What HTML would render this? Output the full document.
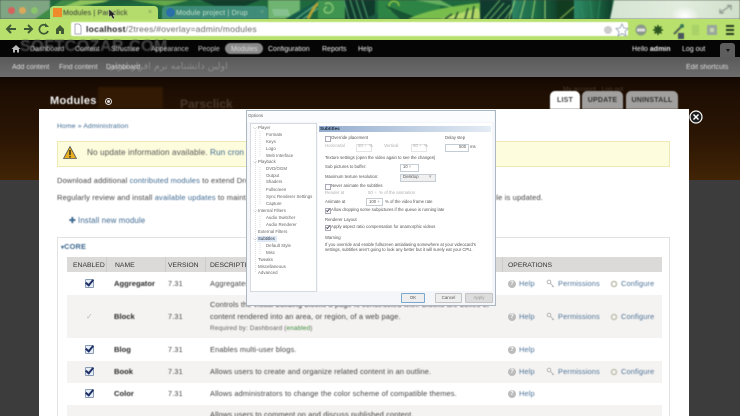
<!DOCTYPE html>
<html><head><meta charset="utf-8"><style>
html,body{margin:0;padding:0;background:#3c3c3c}
#p{position:relative;width:740px;height:416px;overflow:hidden;font-family:"Liberation Sans",sans-serif;background:#3c3c3c}
#p div{position:absolute;white-space:nowrap}
.t{filter:blur(.4px)}
.nav{color:#dcdcdc;font-size:7px;top:45px;line-height:10px;filter:blur(.4px)}
.sub{color:#ddd;font-size:7px;top:63px;line-height:10px;filter:blur(.4px)}
.tab{top:91px;height:18px;border-radius:5px 5px 0 0;background:#a2a09e;color:#333;font-size:7px;font-weight:bold;text-align:center;line-height:19px;letter-spacing:.2px}
.tx{color:#444;font-size:7.6px;line-height:10px;filter:blur(.4px);letter-spacing:.15px}
.l{color:#3f6a92}
.r{left:67px;width:595px}
.nm{left:114px;color:#2a2a2a;font-size:7.6px;font-weight:bold;line-height:10px;filter:blur(.4px)}
.v{left:168px;color:#444;font-size:7.2px;line-height:10px;filter:blur(.4px);letter-spacing:.2px}
.d{left:210px;color:#444;font-size:7.4px;line-height:10px;filter:blur(.4px);letter-spacing:.14px}
.cb{left:85px;width:7px;height:7px;background:#e7edf5;border:1px solid #8a9cb5;border-radius:1px;filter:blur(.3px)}
.cb:after{content:"";position:absolute;left:1px;top:-2px;width:3px;height:6px;border:solid #1d2f66;border-width:0 2px 2px 0;transform:rotate(40deg)}
.op{color:#4d7399;font-size:7.4px;line-height:10px;filter:blur(.4px);letter-spacing:.15px}
.ic{width:8px;height:8px;border-radius:50%;background:#bcbcbc;color:#fff;font-size:6px;line-height:8px;text-align:center;font-weight:bold;filter:blur(.3px)}
.th{top:261px;color:#333;font-size:6.8px;line-height:9px;filter:blur(.3px)}
.o{font-size:4.4px;line-height:6px;color:#666;filter:blur(.25px)}
.ob{font-size:4.25px;line-height:6px;color:#555;filter:blur(.25px)}
.g{color:#b0b0b0}
.box{background:#fff;border:1px solid #aab;width:4px;height:4px}
.ck:after{content:"";position:absolute;left:1px;top:-1px;width:1px;height:3px;border:solid #555;border-width:0 1px 1px 0;transform:rotate(40deg)}
.in{background:#fff;border:1px solid #c4ccd4;height:6px}
.btn{background:#eee;border:1px solid #c4c4c4;height:8px;font-size:4.4px;line-height:8px;text-align:center;color:#555;border-radius:1px;top:293px;filter:blur(.2px)}
</style></head><body><div id="p">

<svg style="position:absolute;left:0;top:0;filter:blur(.7px)" width="740" height="19" viewBox="0 0 740 19">
<defs>
<linearGradient id="g2" x1="0" x2="1"><stop offset="0" stop-color="#d4e4d2"/><stop offset=".55" stop-color="#e2ecde"/><stop offset="1" stop-color="#cfdfca"/></linearGradient>
<linearGradient id="g3" x1="0" x2="1"><stop offset="0" stop-color="#2e8a68"/><stop offset=".5" stop-color="#1f6e48"/><stop offset="1" stop-color="#0f3e2a"/></linearGradient>
<radialGradient id="g4"><stop offset="0" stop-color="#fff"/><stop offset="1" stop-color="#fff" stop-opacity="0"/></radialGradient>
</defs>
<rect width="740" height="19" fill="#1e6a3e"/>
<!-- left -->
<rect width="50" height="19" fill="#7fa582"/>
<path d="M35 19L62 0H78L52 19Z" fill="#3f8c46"/>
<path d="M50 12L80 0H110L70 14Z" fill="#8ec45c"/>
<path d="M78 6L120 0H160L110 6Z" fill="#1b5f38"/>
<path d="M130 0H190L165 6Z" fill="#63a84a"/>
<path d="M190 0H260L235 6Z" fill="#2c8550"/>
<path d="M200 0L215 6H245L260 0Z" fill="#123f2c"/>
<!-- mid -->
<rect x="268" y="0" width="32" height="19" fill="#6fb470"/>
<path d="M285 19L318 0H335L305 19Z" fill="#145a48"/>
<path d="M296 19L322 0M303 19L330 0" stroke="#6fc090" stroke-width="1" fill="none"/>
<path d="M308 19C312 10 316 4 322 0" stroke="#b5a534" stroke-width="3" fill="none"/>
<rect x="318" width="30" height="19" fill="#3f9450"/>
<path d="M325 4a5 5 0 1 1 0 8a3 3 0 0 1 2-5" stroke="#9ed47a" stroke-width="1.200" fill="none"/>
<rect x="345" width="30" height="19" fill="#103a2c"/>
<path d="M350 0L356 19M356 0L362 19M362 0L368 19M344 0L349 19" stroke="#4c9a6c" stroke-width="1.200" fill="none"/>
<path d="M365 19L395 4L385 19Z" fill="#1b5a42"/>
<rect x="378" width="62" height="19" fill="#2e8444"/>
<path d="M395 10a5 5 0 1 1 4 -5" stroke="#9ed243" stroke-width="1.300" fill="none" transform="translate(0 1)"/>
<path d="M385 5L420 19H400Z" fill="#175434"/>
<path d="M415 0L455 8L440 0Z" fill="#65b060"/>
<!-- big leaf -->
<path d="M408 19C430 8 470 4 480 3L482 19Z" fill="#79bd4d"/>
<path d="M440 19L478 8L482 19Z" fill="#b3d868"/>
<path d="M445 19L452 14M455 19L458 12M465 19L468 8M472 19L474 6" stroke="#214a30" stroke-width="1.500" fill="none"/>
<rect x="480" width="50" height="19" fill="#0f3a2e"/>
<path d="M484 19L500 0M490 19L504 3M497 19L510 5M505 19L517 2M512 19L522 0" stroke="#6ab668" stroke-width="1" fill="none"/>
<rect x="512" width="45" height="19" fill="url(#g3)" opacity=".9"/>
<path d="M515 0L509 19M525 0L520 19M535 0L532 19M545 0L545 19" stroke="#a5d676" stroke-width="1" fill="none"/>
<rect x="557" width="18" height="19" fill="#123c20"/>
<path d="M560 19L575 6" stroke="#9ac25a" stroke-width="1" fill="none"/>
<rect x="574" width="38" height="19" fill="url(#g3)"/>
<path d="M580 0L584 19M590 0L592 19M600 0L598 19" stroke="#2c8a5e" stroke-width="1" fill="none"/>
<path d="M614 0L610 19H740V0Z" fill="url(#g2)"/>
<ellipse cx="685" cy="16" rx="14" ry="10" fill="url(#g4)"/>
<path d="M721 12L730 6M727 5.500H731V10M720 9V13H724" stroke="#8a948a" stroke-width="1.300" fill="none"/>
</svg>
<!-- traffic lights -->
<div style="left:8px;top:7px;width:7px;height:7px;border-radius:50%;background:#d5625c;filter:blur(.6px)"></div>
<div style="left:19px;top:7px;width:7px;height:7px;border-radius:50%;background:#dba95a;filter:blur(.6px)"></div>
<div style="left:31px;top:7px;width:7px;height:7px;border-radius:50%;background:#8cc46e;filter:blur(.6px)"></div>
<!-- tabs -->
<div style="left:50px;top:6px;width:108px;height:14px;background:#b3dc6c;border-radius:4px 4px 0 0;filter:blur(.3px)"></div>
<div style="left:162px;top:6px;width:106px;height:13px;background:#3f8d78;border-radius:4px 4px 0 0;filter:blur(.4px)"></div>
<div style="left:273px;top:9px;width:16px;height:7px;background:#86c290;filter:blur(.5px);transform:skewX(15deg)"></div>
<div style="left:53px;top:8px;width:9px;height:9px;background:#ee8a2a;filter:blur(.3px)"></div>
<div class="t" style="left:63px;top:7px;color:#333;font-size:7.2px;line-height:11px;letter-spacing:.15px">Modules | Parsclick</div>
<div class="t" style="left:148px;top:7px;color:#7a9a60;font-size:7px;line-height:11px">×</div>
<div style="left:166px;top:8px;width:9px;height:9px;border-radius:50%;background:#2b6fa8;filter:blur(.3px)"></div>
<div class="t" style="left:176px;top:7px;color:#c5e0cc;font-size:7.2px;line-height:11px;letter-spacing:.15px;width:72px;overflow:hidden">Module project | Drupal</div>
<div class="t" style="left:260px;top:7px;color:#7aa88a;font-size:7px;line-height:11px">×</div>
<svg style="position:absolute;left:108px;top:9px" width="8" height="11" viewBox="0 0 8 11"><path d="M1 0L1 8L3 6.500L5 10L6.500 9L5 6H7.500Z" fill="#222" stroke="#ddd" stroke-width=".4"/></svg>

<!-- toolbar -->
<div style="left:0;top:19px;width:740px;height:21px;background:#b7e06c;filter:blur(.3px)"></div>
<div style="left:71px;top:22px;width:557px;height:14px;background:#fff;border-radius:2px;filter:blur(.4px)"></div>
<svg style="position:absolute;left:0;top:19px;filter:blur(.3px)" width="85" height="21" viewBox="0 0 85 21" fill="none" stroke="#3f5a35" stroke-width="2">
<path d="M16 10H8M11 6L7 10L11 14"/>
<path d="M24 10H31M28 6L32 10L28 14"/>
<path d="M47 7A4.500 4.500 0 1 0 48 12" stroke-width="1.700"/><path d="M45 4L49 8H45Z" fill="#3f5a35" stroke="none"/>
<path d="M56 10L60 6L64 10V15H61V12H59V15H56Z" fill="#3f5a35" stroke="none"/>
<path d="M75 5H79L81 7V15H75Z" stroke="#99a" stroke-width=".8" fill="#fff"/>
</svg>
<div class="t" style="left:86px;top:23px;font-size:8.5px;line-height:13px;color:#666;letter-spacing:.27px"><span style="color:#222;font-weight:bold">localhost</span>/2trees/#overlay=admin/modules</div>
<svg style="position:absolute;left:600px;top:19px;filter:blur(.4px)" width="140" height="21" viewBox="0 0 140 21">
<circle cx="8" cy="11" r="4" fill="#ccc"/>
<path d="M22 5L24 9L28 9.500L25 12.500L26 17L22 14.500L18 17L19 12.500L16 9.500L20 9Z" fill="#fff" stroke="#8a99a8" stroke-width=".8"/>
<circle cx="41" cy="11" r="5.500" fill="#8a9a8a"/><rect x="37" y="9.500" width="8" height="3" fill="#ddd"/>
<circle cx="58" cy="11" r="3.500" fill="#2c5420"/><circle cx="58" cy="11" r="1.200" fill="#b7e06c"/><path d="M58 6V16M53 11H63M54.500 7.500L61.500 14.500M61.500 7.500L54.500 14.500" stroke="#2c5420" stroke-width="1.500"/>
<path d="M74 15L82 7" stroke="#5a6a55" stroke-width="2.200"/><circle cx="82" cy="7" r="2" fill="#3a7a58"/><rect x="78" y="14" width="6" height="6" fill="#4a5560"/>
<rect x="92" y="6" width="7" height="10" fill="#a9d268"/>
<rect x="107" y="6" width="10" height="10" fill="#99a89a"/><rect x="110" y="9" width="4" height="4" fill="#c7d6b0"/>
<path d="M126 7H134M126 11H134M126 15H134" stroke="#2a3a22" stroke-width="2"/>
</svg>

<!-- black nav -->
<div style="left:0;top:40px;width:740px;height:17px;background:#050505"></div>
<!-- gray bar -->
<div style="left:0;top:57px;width:740px;height:20px;background:linear-gradient(#5a5a5a,#6c6c6c)"></div>
<div class="t" style="left:20px;top:40px;font-size:16px;font-weight:bold;color:#454545;line-height:14px;letter-spacing:.5px;height:17px;overflow:hidden;filter:blur(.7px)">SOFTCOZAR.COM</div>
<div class="t" style="left:108px;top:60px;font-size:9.500px;color:#8e8e8e;line-height:13px;font-family:'DejaVu Sans',sans-serif;filter:blur(.5px)">اولین دانشنامه نرم افزار ایران</div>
<svg style="position:absolute;left:11px;top:44px;filter:blur(.3px)" width="10" height="9" viewBox="0 0 10 9"><path d="M5 1L9.500 5H8V8.500H6V6H4V8.500H2V5H.5Z" fill="#bbb"/></svg>
<div class="nav" style="left:30px;color:#c8c8c8">Dashboard</div>
<div class="nav" style="left:75px;color:#c8c8c8">Content</div>
<div class="nav" style="left:111px;color:#c8c8c8">Structure</div>
<div class="nav" style="left:151px;color:#c8c8c8">Appearance</div>
<div class="nav" style="left:198px;color:#c8c8c8">People</div>
<div style="left:225px;top:43px;width:38px;height:11px;border-radius:6px;background:#8a8a8a;filter:blur(.4px)"></div>
<div class="nav" style="left:231px">Modules</div>
<div class="nav" style="left:268px;color:#eee">Configuration</div>
<div class="nav" style="left:322px;color:#eee">Reports</div>
<div class="nav" style="left:358px;color:#eee">Help</div>
<div class="nav" style="left:632px;color:#eee">Hello <b>admin</b></div>
<div class="nav" style="left:682px;color:#eee">Log out</div>
<div style="left:720px;top:43px;width:15px;height:14px;background:#5d5d5d;border-radius:3px 3px 0 0"></div>
<div style="left:726px;top:49px;width:0;height:0;border:2px solid transparent;border-top:3px solid #111"></div>
<div class="sub" style="left:12px">Add content</div>
<div class="sub" style="left:59px">Find content</div>
<div class="sub" style="left:106px">Dashboard</div>
<div class="sub" style="left:686px">Edit shortcuts</div>

<!-- brown -->
<div style="left:0;top:77px;width:740px;height:103px;background:linear-gradient(#140902,#1e0e03 15%,#2c1604 60%,#422405)"></div>
<div style="left:98px;top:87px;width:65px;height:22px;background:#321a05;filter:blur(1px)"></div>
<div class="t" style="left:180px;top:98px;font-size:12px;font-weight:bold;color:#4a3a2c;line-height:13px;filter:blur(.7px)">Parsclick</div>
<div class="t" style="left:563px;top:86px;font-size:6.500px;color:#4a3a2c;line-height:8px">My account &nbsp; Log out</div>
<div class="t" style="left:50px;top:95px;font-size:11px;font-weight:bold;color:#f2f2f2;line-height:13px;letter-spacing:.3px">Modules</div>
<div style="left:105px;top:98px;width:5px;height:5px;border:1px solid #ddd;border-radius:50%;filter:blur(.2px)"></div>
<div style="left:107px;top:100px;width:3px;height:3px;background:#ddd;border-radius:50%"></div>
<div class="tab t" style="left:550px;width:30px;background:#fff;color:#444">LIST</div>
<div class="tab t" style="left:582px;width:41px">UPDATE</div>
<div class="tab t" style="left:626px;width:52px">UNINSTALL</div>

<!-- overlay -->
<div style="left:39px;top:109px;width:650px;height:307px;background:#fff"></div>
<div style="left:0;top:180px;width:39px;height:236px;background:#3c3c3c"></div>
<svg style="position:absolute;left:689px;top:110px;filter:blur(.2px)" width="14" height="14" viewBox="0 0 14 14"><circle cx="7" cy="7" r="6" fill="#1d1d1d" stroke="#fff" stroke-width="1.200"/><path d="M4.500 4.500L9.500 9.500M9.500 4.500L4.500 9.500" stroke="#fff" stroke-width="1.500"/></svg>

<div class="tx l" style="left:57px;top:122px;font-size:6.800px">Home » Administration</div>
<div style="left:57px;top:141px;width:611px;height:24px;background:#fdfcdc;border:1px solid #eee9b4;filter:blur(.3px)"></div>
<svg style="position:absolute;left:63px;top:146px;filter:blur(.3px)" width="14" height="13" viewBox="0 0 14 13"><path d="M7 .5L13.500 12.500H.5Z" fill="#e8b020" stroke="#555" stroke-width=".8"/><path d="M7 4V9M7 10V11.500" stroke="#222" stroke-width="1.400"/></svg>
<div class="tx" style="left:87px;top:148px;font-size:8.200px;color:#555;letter-spacing:.1px">No update information available. <span class="l">Run cron or</span></div>
<div class="tx" style="left:57px;top:176px;font-size:7.500px">Download additional <span class="l">contributed modules</span> to extend Drupal's functionality.</div>
<div class="tx" style="left:57px;top:193px;font-size:7.500px">Regularly review and install <span class="l">available updates</span> to maintain</div>
<div class="tx" style="left:492px;top:193px;font-size:7.500px">ule is updated.</div>
<div class="tx l" style="left:69px;top:216px;font-size:7.800px"><b>✚</b> Install new module</div>
<div style="left:57px;top:237px;width:611px;height:180px;border:1px solid #e2e2e2;border-bottom:0"></div>
<div class="tx l" style="left:61px;top:242px;font-weight:bold;font-size:7.400px"><span style="font-size:6px">▾</span>CORE</div>

<!-- table -->
<div class="r" style="top:257px;height:15px;background:#dcdad8"></div>
<div class="r" style="top:295px;height:43px;background:#f5f3f1"></div>
<div class="r" style="top:361px;height:22px;background:#f5f3f1"></div>
<div class="r" style="top:405px;height:11px;background:#f5f3f1"></div>
<div class="th" style="left:73px">ENABLED</div>
<div class="th" style="left:115px">NAME</div>
<div class="th" style="left:168px">VERSION</div>
<div class="th" style="left:210px">DESCRIPTION</div>
<div class="th" style="left:508px">OPERATIONS</div>
<div style="left:106px;top:257px;width:1px;height:15px;background:#ccc"></div>
<div style="left:165px;top:257px;width:1px;height:15px;background:#ccc"></div>
<div style="left:205px;top:257px;width:1px;height:15px;background:#ccc"></div>
<div style="left:502px;top:257px;width:1px;height:15px;background:#ccc"></div>

<div class="cb" style="top:279px"></div><div class="nm" style="top:279px">Aggregator</div><div class="v" style="top:279px">7.31</div><div class="d" style="top:279px">Aggregates syndicated content</div>
<div class="nm" style="top:312px">Block</div><div class="v" style="top:312px">7.31</div>
<div style="left:86px;top:312px;color:#bbb;font-size:8px;line-height:10px">✓</div>
<div class="d" style="top:300px">Controls the visual building blocks a page is constructed with. Blocks are boxes of</div>
<div class="d" style="top:312px">content rendered into an area, or region, of a web page.</div>
<div class="d" style="top:324px;font-size:6.400px;color:#666">Required by: Dashboard (<span style="color:#3d8a3d">enabled</span>)</div>
<div class="cb" style="top:345px"></div><div class="nm" style="top:345px">Blog</div><div class="v" style="top:345px">7.31</div><div class="d" style="top:345px">Enables multi-user blogs.</div>
<div class="cb" style="top:367px"></div><div class="nm" style="top:367px">Book</div><div class="v" style="top:367px">7.31</div><div class="d" style="top:367px">Allows users to create and organize related content in an outline.</div>
<div class="cb" style="top:389px"></div><div class="nm" style="top:389px">Color</div><div class="v" style="top:389px">7.31</div><div class="d" style="top:389px">Allows administrators to change the color scheme of compatible themes.</div>
<div class="d" style="top:410px">Allows users to comment on and discuss published content.</div>

<!-- ops -->
<div class="ic" style="left:508px;top:280px">?</div><div class="op" style="left:519px;top:279px">Help</div>
<div class="op" style="left:558px;top:279px">Permissions</div><div class="op" style="left:621px;top:279px">Configure</div>
<div class="ic" style="left:508px;top:313px">?</div><div class="op" style="left:519px;top:312px">Help</div>
<div class="op" style="left:558px;top:312px">Permissions</div><div class="op" style="left:621px;top:312px">Configure</div>
<div class="ic" style="left:508px;top:346px">?</div><div class="op" style="left:519px;top:345px">Help</div>
<div class="ic" style="left:508px;top:368px">?</div><div class="op" style="left:519px;top:367px">Help</div>
<div class="op" style="left:558px;top:367px">Permissions</div><div class="op" style="left:621px;top:367px">Configure</div>
<div class="ic" style="left:508px;top:390px">?</div><div class="op" style="left:519px;top:389px">Help</div>
<svg style="position:absolute;left:546px;top:279px;filter:blur(.3px)" width="10" height="100" viewBox="0 0 10 100" fill="none" stroke="#c2c2c2" stroke-width="1.200"><circle cx="3" cy="3" r="1.800"/><path d="M4.500 4.500L8 8M7 7L6 8"/><g transform="translate(0 33)"><circle cx="3" cy="3" r="1.800"/><path d="M4.500 4.500L8 8M7 7L6 8"/></g><g transform="translate(0 88)"><circle cx="3" cy="3" r="1.800"/><path d="M4.500 4.500L8 8M7 7L6 8"/></g></svg>
<svg style="position:absolute;left:610px;top:280px;filter:blur(.3px)" width="9" height="98" viewBox="0 0 9 98" fill="none" stroke="#cfcfc2" stroke-width="2"><circle cx="4" cy="4" r="2.500"/><circle cx="4" cy="37" r="2.500"/><circle cx="4" cy="92" r="2.500"/></svg>

<!-- dialog -->
<div style="left:246px;top:110px;width:248px;height:194px;background:#f4f6f9;border:1px solid #aab6c2;filter:blur(.2px)"></div>
<div style="left:247px;top:111px;width:247px;height:11px;background:#fbfcfd"></div>
<div class="o" style="left:248px;top:113px">Options</div>
<div style="left:250px;top:123px;width:65px;height:167px;background:#fff;border:1px solid #d4dae0"></div>
<div style="left:318px;top:123px;width:174px;height:168px;background:#fff"></div>
<div style="left:319px;top:126px;width:172px;height:6px;background:linear-gradient(90deg,#93accf,#e4ecf4)"></div>
<div class="ob" style="left:320px;top:126px;font-weight:bold;color:#123;font-size:4.700px">Subtitles</div>

<div class="o" style="left:258px;top:125px">Player</div>
<div class="o" style="left:266px;top:132px">Formats</div>
<div class="o" style="left:266px;top:139px">Keys</div>
<div class="o" style="left:266px;top:146px">Logo</div>
<div class="o" style="left:266px;top:153px">Web Interface</div>
<div class="o" style="left:258px;top:159px">Playback</div>
<div class="o" style="left:266px;top:166px">DVD/OGM</div>
<div class="o" style="left:266px;top:173px">Output</div>
<div class="o" style="left:266px;top:179px">Shaders</div>
<div class="o" style="left:266px;top:187px">Fullscreen</div>
<div class="o" style="left:266px;top:194px">Sync Renderer Settings</div>
<div class="o" style="left:266px;top:201px">Capture</div>
<div class="o" style="left:258px;top:208px">Internal Filters</div>
<div class="o" style="left:266px;top:215px">Audio Switcher</div>
<div class="o" style="left:266px;top:222px">Audio Renderer</div>
<div class="o" style="left:258px;top:229px">External Filters</div>
<div style="left:257px;top:236px;width:20px;height:6px;background:#dfe8f5"></div>
<div class="o" style="left:258px;top:236px;color:#234">Subtitles</div>
<div class="o" style="left:266px;top:243px">Default Style</div>
<div class="o" style="left:266px;top:250px">Misc</div>
<div class="o" style="left:258px;top:257px">Tweaks</div>
<div class="o" style="left:258px;top:264px">Miscellaneous</div>
<div class="o" style="left:258px;top:270px">Advanced</div>
<svg style="position:absolute;left:252px;top:125px" width="14" height="155" viewBox="0 0 14 155" fill="none" stroke="#b4bcc0" stroke-width=".5"><path d="M1 2L3 4L5 2M1 36L3 38L5 36M1 85L3 87L5 85M1 113L3 115L5 113"/><path d="M3.500 6V148M8 6V31M8 42V80M8 91V102M8 118V130" stroke-dasharray="1 1"/></svg>

<!-- right panel -->
<div class="box" style="left:325px;top:136px"></div><div class="ob" style="left:331px;top:135px">Override placement</div>
<div class="ob" style="left:445px;top:135px">Delay step</div>
<div class="o g" style="left:325px;top:143px">Horizontal</div><div class="in" style="left:356px;top:144px;width:14px;border-color:#e4e4e4"></div><div class="o g" style="left:358px;top:143px">50 ÷ &nbsp;%</div>
<div class="o g" style="left:384px;top:143px">Vertical</div><div class="in" style="left:411px;top:144px;width:14px;border-color:#e4e4e4"></div><div class="o g" style="left:413px;top:143px">90 ÷ &nbsp;%</div>
<div class="in" style="left:445px;top:144px;width:22px"></div><div class="ob" style="left:459px;top:144px">500</div><div class="ob" style="left:470px;top:144px">ms</div>
<div class="ob" style="left:325px;top:155px">Texture settings (open the video again to see the changes)</div>
<div class="ob" style="left:325px;top:164px">Sub pictures to buffer:</div>
<div class="in" style="left:400px;top:164px;width:17px"></div><div class="ob" style="left:403px;top:164px">10 ÷</div>
<div class="ob" style="left:325px;top:174px">Maximum texture resolution:</div>
<div class="in" style="left:400px;top:174px;width:34px;background:#f0f0f0"></div><div class="ob" style="left:403px;top:174px">Desktop</div><div class="ob" style="left:429px;top:174px">˅</div>
<div class="box" style="left:325px;top:184px"></div><div class="ob" style="left:331px;top:183px">Never animate the subtitles</div>
<div class="o g" style="left:325px;top:190px">Render at</div><div class="o g" style="left:368px;top:190px">50 ÷ &nbsp;% of the animation</div>
<div class="ob" style="left:325px;top:199px">Animate at</div><div class="in" style="left:366px;top:198px;width:15px"></div><div class="ob" style="left:369px;top:199px">100 ÷</div><div class="ob" style="left:385px;top:199px">% of the video frame rate</div>
<div class="box ck" style="left:325px;top:208px"></div><div class="ob" style="left:331px;top:207px">Allow dropping some subpictures if the queue is running late</div>
<div class="ob" style="left:325px;top:217px">Renderer Layout</div>
<div class="box ck" style="left:325px;top:225px"></div><div class="ob" style="left:331px;top:224px">Apply aspect ratio compensation for anamorphic videos</div>
<div class="ob" style="left:325px;top:235px">Warning</div>
<div class="ob" style="left:325px;top:242px">If you override and enable fullscreen antialiasing somewhere at your videocard's</div>
<div class="ob" style="left:325px;top:247px">settings, subtitles aren't going to look any better but it will surely eat your CPU.</div>
<div class="btn" style="left:401px;width:22px;border-color:#7aa8cc">OK</div>
<div class="btn" style="left:435px;width:25px">Cancel</div>
<div class="btn" style="left:465px;width:26px;background:#ddd;color:#999">Apply</div>
</div></body></html>
